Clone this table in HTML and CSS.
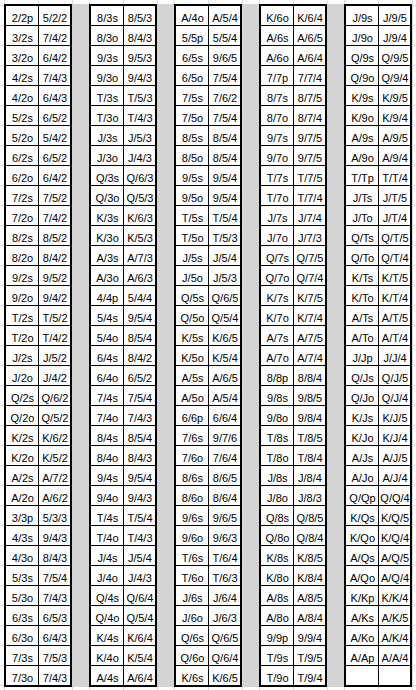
FILE: index.html
```html
<!DOCTYPE html>
<html>
<head>
<meta charset="utf-8">
<link rel="stylesheet" href="styles.css">
</head>
<body>
<div class="sheet">
<div class="grp">
<span>2/2p</span><span>5/2/2</span>
<span>3/2s</span><span>7/4/2</span>
<span>3/2o</span><span>6/4/2</span>
<span>4/2s</span><span>7/4/3</span>
<span>4/2o</span><span>6/4/3</span>
<span>5/2s</span><span>6/5/2</span>
<span>5/2o</span><span>5/4/2</span>
<span>6/2s</span><span>6/5/2</span>
<span>6/2o</span><span>6/4/2</span>
<span>7/2s</span><span>7/5/2</span>
<span>7/2o</span><span>7/4/2</span>
<span>8/2s</span><span>8/5/2</span>
<span>8/2o</span><span>8/4/2</span>
<span>9/2s</span><span>9/5/2</span>
<span>9/2o</span><span>9/4/2</span>
<span>T/2s</span><span>T/5/2</span>
<span>T/2o</span><span>T/4/2</span>
<span>J/2s</span><span>J/5/2</span>
<span>J/2o</span><span>J/4/2</span>
<span>Q/2s</span><span>Q/6/2</span>
<span>Q/2o</span><span>Q/5/2</span>
<span>K/2s</span><span>K/6/2</span>
<span>K/2o</span><span>K/5/2</span>
<span>A/2s</span><span>A/7/2</span>
<span>A/2o</span><span>A/6/2</span>
<span>3/3p</span><span>5/3/3</span>
<span>4/3s</span><span>9/4/3</span>
<span>4/3o</span><span>8/4/3</span>
<span>5/3s</span><span>7/5/4</span>
<span>5/3o</span><span>7/4/3</span>
<span>6/3s</span><span>6/5/3</span>
<span>6/3o</span><span>6/4/3</span>
<span>7/3s</span><span>7/5/3</span>
<span>7/3o</span><span>7/4/3</span>
</div>
<div class="fill">&nbsp;</div>
<div class="grp">
<span>8/3s</span><span>8/5/3</span>
<span>8/3o</span><span>8/4/3</span>
<span>9/3s</span><span>9/5/3</span>
<span>9/3o</span><span>9/4/3</span>
<span>T/3s</span><span>T/5/3</span>
<span>T/3o</span><span>T/4/3</span>
<span>J/3s</span><span>J/5/3</span>
<span>J/3o</span><span>J/4/3</span>
<span>Q/3s</span><span>Q/6/3</span>
<span>Q/3o</span><span>Q/5/3</span>
<span>K/3s</span><span>K/6/3</span>
<span>K/3o</span><span>K/5/3</span>
<span>A/3s</span><span>A/7/3</span>
<span>A/3o</span><span>A/6/3</span>
<span>4/4p</span><span>5/4/4</span>
<span>5/4s</span><span>9/5/4</span>
<span>5/4o</span><span>8/5/4</span>
<span>6/4s</span><span>8/4/2</span>
<span>6/4o</span><span>6/5/2</span>
<span>7/4s</span><span>7/5/4</span>
<span>7/4o</span><span>7/4/3</span>
<span>8/4s</span><span>8/5/4</span>
<span>8/4o</span><span>8/4/3</span>
<span>9/4s</span><span>9/5/4</span>
<span>9/4o</span><span>9/4/3</span>
<span>T/4s</span><span>T/5/4</span>
<span>T/4o</span><span>T/4/3</span>
<span>J/4s</span><span>J/5/4</span>
<span>J/4o</span><span>J/4/3</span>
<span>Q/4s</span><span>Q/6/4</span>
<span>Q/4o</span><span>Q/5/4</span>
<span>K/4s</span><span>K/6/4</span>
<span>K/4o</span><span>K/5/4</span>
<span>A/4s</span><span>A/6/4</span>
</div>
<div class="fill">&nbsp;</div>
<div class="grp">
<span>A/4o</span><span>A/5/4</span>
<span>5/5p</span><span>5/5/4</span>
<span>6/5s</span><span>9/6/5</span>
<span>6/5o</span><span>7/5/4</span>
<span>7/5s</span><span>7/6/2</span>
<span>7/5o</span><span>7/5/4</span>
<span>8/5s</span><span>8/5/4</span>
<span>8/5o</span><span>8/5/4</span>
<span>9/5s</span><span>9/5/4</span>
<span>9/5o</span><span>9/5/4</span>
<span>T/5s</span><span>T/5/4</span>
<span>T/5o</span><span>T/5/3</span>
<span>J/5s</span><span>J/5/4</span>
<span>J/5o</span><span>J/5/3</span>
<span>Q/5s</span><span>Q/6/5</span>
<span>Q/5o</span><span>Q/5/4</span>
<span>K/5s</span><span>K/6/5</span>
<span>K/5o</span><span>K/5/4</span>
<span>A/5s</span><span>A/6/5</span>
<span>A/5o</span><span>A/5/4</span>
<span>6/6p</span><span>6/6/4</span>
<span>7/6s</span><span>9/7/6</span>
<span>7/6o</span><span>7/6/4</span>
<span>8/6s</span><span>8/6/5</span>
<span>8/6o</span><span>8/6/4</span>
<span>9/6s</span><span>9/6/5</span>
<span>9/6o</span><span>9/6/3</span>
<span>T/6s</span><span>T/6/4</span>
<span>T/6o</span><span>T/6/3</span>
<span>J/6s</span><span>J/6/4</span>
<span>J/6o</span><span>J/6/3</span>
<span>Q/6s</span><span>Q/6/5</span>
<span>Q/6o</span><span>Q/6/4</span>
<span>K/6s</span><span>K/6/5</span>
</div>
<div class="fill">&nbsp;</div>
<div class="grp">
<span>K/6o</span><span>K/6/4</span>
<span>A/6s</span><span>A/6/5</span>
<span>A/6o</span><span>A/6/4</span>
<span>7/7p</span><span>7/7/4</span>
<span>8/7s</span><span>8/7/5</span>
<span>8/7o</span><span>8/7/4</span>
<span>9/7s</span><span>9/7/5</span>
<span>9/7o</span><span>9/7/5</span>
<span>T/7s</span><span>T/7/5</span>
<span>T/7o</span><span>T/7/4</span>
<span>J/7s</span><span>J/7/4</span>
<span>J/7o</span><span>J/7/3</span>
<span>Q/7s</span><span>Q/7/5</span>
<span>Q/7o</span><span>Q/7/4</span>
<span>K/7s</span><span>K/7/5</span>
<span>K/7o</span><span>K/7/4</span>
<span>A/7s</span><span>A/7/5</span>
<span>A/7o</span><span>A/7/4</span>
<span>8/8p</span><span>8/8/4</span>
<span>9/8s</span><span>9/8/5</span>
<span>9/8o</span><span>9/8/4</span>
<span>T/8s</span><span>T/8/5</span>
<span>T/8o</span><span>T/8/4</span>
<span>J/8s</span><span>J/8/4</span>
<span>J/8o</span><span>J/8/3</span>
<span>Q/8s</span><span>Q/8/5</span>
<span>Q/8o</span><span>Q/8/4</span>
<span>K/8s</span><span>K/8/5</span>
<span>K/8o</span><span>K/8/4</span>
<span>A/8s</span><span>A/8/5</span>
<span>A/8o</span><span>A/8/4</span>
<span>9/9p</span><span>9/9/4</span>
<span>T/9s</span><span>T/9/5</span>
<span>T/9o</span><span>T/9/4</span>
</div>
<div class="fill">&nbsp;</div>
<div class="grp">
<span>J/9s</span><span>J/9/5</span>
<span>J/9o</span><span>J/9/4</span>
<span>Q/9s</span><span>Q/9/5</span>
<span>Q/9o</span><span>Q/9/4</span>
<span>K/9s</span><span>K/9/5</span>
<span>K/9o</span><span>K/9/4</span>
<span>A/9s</span><span>A/9/5</span>
<span>A/9o</span><span>A/9/4</span>
<span>T/Tp</span><span>T/T/4</span>
<span>J/Ts</span><span>J/T/5</span>
<span>J/To</span><span>J/T/4</span>
<span>Q/Ts</span><span>Q/T/5</span>
<span>Q/To</span><span>Q/T/4</span>
<span>K/Ts</span><span>K/T/5</span>
<span>K/To</span><span>K/T/4</span>
<span>A/Ts</span><span>A/T/5</span>
<span>A/To</span><span>A/T/4</span>
<span>J/Jp</span><span>J/J/4</span>
<span>Q/Js</span><span>Q/J/5</span>
<span>Q/Jo</span><span>Q/J/4</span>
<span>K/Js</span><span>K/J/5</span>
<span>K/Jo</span><span>K/J/4</span>
<span>A/Js</span><span>A/J/5</span>
<span>A/Jo</span><span>A/J/4</span>
<span>Q/Qp</span><span>Q/Q/4</span>
<span>K/Qs</span><span>K/Q/5</span>
<span>K/Qo</span><span>K/Q/4</span>
<span>A/Qs</span><span>A/Q/5</span>
<span>A/Qo</span><span>A/Q/4</span>
<span>K/Kp</span><span>K/K/4</span>
<span>A/Ks</span><span>A/K/5</span>
<span>A/Ko</span><span>A/K/4</span>
<span>A/Ap</span><span>A/A/4</span>
<span>&nbsp;</span><span>&nbsp;</span>
</div>
</div>
</body>
</html>
```
FILE: styles.css
```css
html {
  background: #ffffff;
}

body {
  margin: 0;
  min-height: 690px;
  font-family: "Liberation Sans", Arial, sans-serif;
  color: #000;
  background-image:
    repeating-linear-gradient(to right, #dadcdd 0 1px, transparent 1px 34px, #dadcdd 34px 35px, transparent 35px 68px, #dadcdd 68px 69px, transparent 69px 85px),
    repeating-linear-gradient(to bottom, #dadcdd 0 1px, transparent 1px 20px);
  background-position: 4px 0, 0 5px;
}

.sheet {
  display: flex;
  margin: 0;
  padding: 4px 0 0 4px;
  width: max-content;
}

.grp {
  flex: 0 0 auto;
  display: grid;
  grid-template-columns: 32px 31px;
  grid-auto-rows: 19px;
  gap: 1px;
  background-color: #000;
  border: 2px solid #000;
}

.grp span {
  background-color: #fff;
  display: flex;
  align-items: flex-end;
  justify-content: center;
  font-size: 11px;
  line-height: 12px;
  padding: 0 0 1px 1px;
  white-space: nowrap;
}

.fill {
  flex: 0 0 17px;
  font-size: 1px;
  background-color: #d4d4d4;
}
```
